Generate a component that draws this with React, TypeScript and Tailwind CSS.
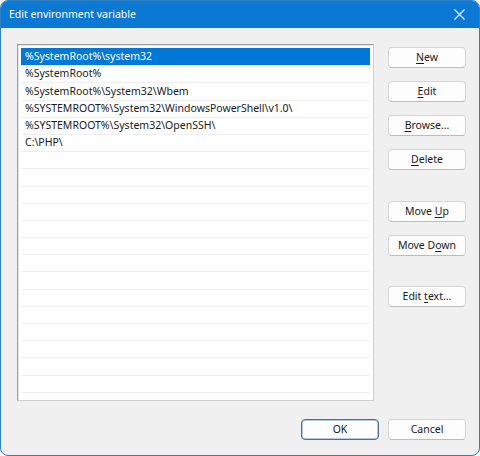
import React from 'react';

const paths = [
  '%SystemRoot%\\system32',
  '%SystemRoot%',
  '%SystemRoot%\\System32\\Wbem',
  '%SYSTEMROOT%\\System32\\WindowsPowerShell\\v1.0\\',
  '%SYSTEMROOT%\\System32\\OpenSSH\\',
  'C:\\PHP\\',
];

const ROWS = 21;

function Btn({ label, hot = -1, primary, className = '' }: { label: string; hot?: number; primary?: boolean; className?: string }) {
  return (
    <button
      className={
        'w-[78px] h-[21px] rounded-[4px] bg-[#fdfdfd] text-[10.5px] text-[#1a1a1a] flex items-center justify-center leading-none ' +
        (primary
          ? 'border border-[#4f6f8f] shadow-[inset_0_0_0_1px_#b5c7d8] '
          : 'border border-[#d5d5d5] border-b-[#bcbcbc] ') +
        className
      }
    >
      {hot < 0 ? (
        <span>{label}</span>
      ) : (
        <span>
          {label.slice(0, hot)}
          <span className="underline underline-offset-2">{label[hot]}</span>
          {label.slice(hot + 1)}
        </span>
      )}
    </button>
  );
}

export default function App() {
  return (
    <div
      className="w-[480px] h-[456px] bg-white"
      style={{ fontFamily: '"Noto Sans", "Open Sans", sans-serif' }}
    >
      <div className="w-full h-full flex flex-col rounded-[8px] border border-[#2f7fc4] bg-[#f0f0f0] overflow-hidden">
        {/* Title bar */}
        <div className="h-[27px] shrink-0 bg-[#0b78d3] flex items-center justify-between pl-[8px] pr-[12px]">
          <span className="text-white text-[10.5px]">Edit environment variable</span>
          <svg width="11" height="11" viewBox="0 0 11 11" className="mr-[2px]">
            <path d="M0.5 0.5L10.5 10.5M10.5 0.5L0.5 10.5" stroke="white" strokeWidth="1.1" />
          </svg>
        </div>

        {/* Body */}
        <div className="flex flex-1 pl-[16px] pt-[16px] pr-[13px]">
          <div className="w-[357px] h-[357px] border border-[#a0a0a0] border-r-[#cfcfcf] border-b-[#cfcfcf] bg-white shadow-[inset_1px_1px_0_#e3e3e3] pt-[3px] px-[3px] overflow-hidden">
            {Array.from({ length: ROWS }).map((_, i) => (
              <div
                key={i}
                className={
                  'h-[17.2px] flex items-center px-[4px] text-[10.5px] whitespace-nowrap ' +
                  (i === 0
                    ? 'bg-[#0078d7] text-white'
                    : 'border-t border-[#efefef] text-[#1a1a1a]')
                }
              >
                {paths[i] ?? ''}
              </div>
            ))}
          </div>

          <div className="flex flex-col ml-[14px] pt-[3px]">
            <Btn label="New" hot={0} />
            <Btn label="Edit" hot={0} className="mt-[13px]" />
            <Btn label="Browse..." hot={0} className="mt-[13px]" />
            <Btn label="Delete" hot={0} className="mt-[13px]" />
            <Btn label="Move Up" hot={5} className="mt-[31px]" />
            <Btn label="Move Down" hot={6} className="mt-[13px]" />
            <Btn label="Edit text..." hot={5} className="mt-[30px]" />
          </div>
        </div>

        {/* Footer */}
        <div className="flex justify-end gap-[9px] pr-[13px] pb-[15px]">
          <Btn label="OK" primary />
          <Btn label="Cancel" />
        </div>
      </div>
    </div>
  );
}
